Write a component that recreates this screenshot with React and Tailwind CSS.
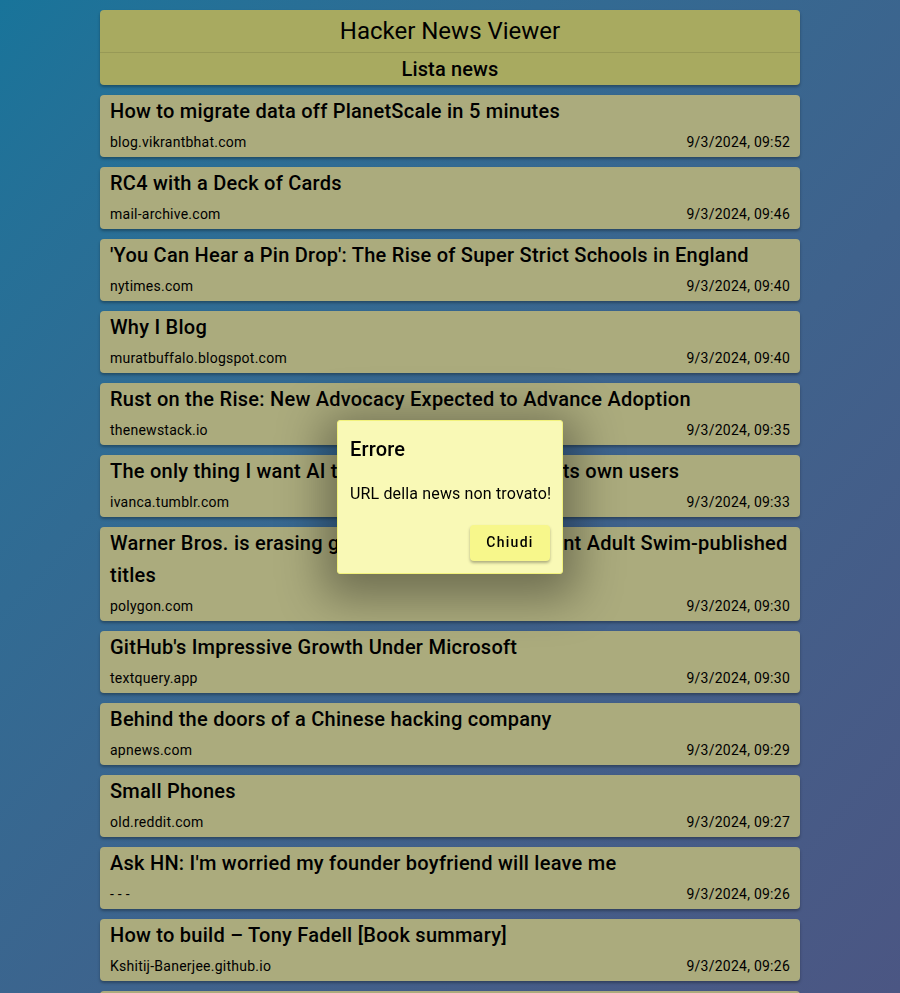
const news = [
  { title: "How to migrate data off PlanetScale in 5 minutes", site: "blog.vikrantbhat.com", time: "9/3/2024, 09:52" },
  { title: "RC4 with a Deck of Cards", site: "mail-archive.com", time: "9/3/2024, 09:46" },
  { title: "'You Can Hear a Pin Drop': The Rise of Super Strict Schools in England", site: "nytimes.com", time: "9/3/2024, 09:40" },
  { title: "Why I Blog", site: "muratbuffalo.blogspot.com", time: "9/3/2024, 09:40" },
  { title: "Rust on the Rise: New Advocacy Expected to Advance Adoption", site: "thenewstack.io", time: "9/3/2024, 09:35" },
  { title: "The only thing I want AI to do is protect me from its own users", site: "ivanca.tumblr.com", time: "9/3/2024, 09:33" },
  { title: "Warner Bros. is erasing games, including the recent Adult Swim-published titles", site: "polygon.com", time: "9/3/2024, 09:30" },
  { title: "GitHub's Impressive Growth Under Microsoft", site: "textquery.app", time: "9/3/2024, 09:30" },
  { title: "Behind the doors of a Chinese hacking company", site: "apnews.com", time: "9/3/2024, 09:29" },
  { title: "Small Phones", site: "old.reddit.com", time: "9/3/2024, 09:27" },
  { title: "Ask HN: I'm worried my founder boyfriend will leave me", site: "- - -", time: "9/3/2024, 09:26" },
  { title: "How to build – Tony Fadell [Book summary]", site: "Kshitij-Banerjee.github.io", time: "9/3/2024, 09:26" },
  { title: "Show HN: A tiny terminal text editor", site: "github.com", time: "9/3/2024, 09:21" },
];

function NewsCard({ item }) {
  return (
    <div className="bg-[#abab7d] rounded-[4px] shadow-[0_2px_3px_rgba(0,0,0,0.3)] px-[10px] text-black">
      <div className="text-[20px] font-medium leading-8 tracking-[0.25px]">{item.title}</div>
      <div className="flex justify-between text-[14px] leading-5 py-[5px] tracking-[0.25px]">
        <span>{item.site}</span>
        <span>{item.time}</span>
      </div>
    </div>
  );
}

export default function App() {
  return (
    <div
      className="min-h-screen bg-fixed bg-linear-to-br from-[#18749a] to-[#4b5683] text-black"
      style={{ fontFamily: "Roboto, 'Liberation Sans', sans-serif" }}
    >
      <div className="w-[700px] mx-auto pt-[10px] flex flex-col gap-[10px]">
        <div className="bg-[#a8aa60] rounded-[4px] shadow-[0_2px_3px_rgba(0,0,0,0.3)]">
          <div className="h-[43px] flex items-center justify-center text-[24px] border-b border-[#979956]">
            Hacker News Viewer
          </div>
          <div className="h-[32px] flex items-center justify-center text-[20px] font-medium tracking-[0.15px]">
            Lista news
          </div>
        </div>
        {news.map((item, i) => (
          <NewsCard key={i} item={item} />
        ))}
      </div>

      {/* Dialog errore */}
      <div className="fixed inset-0 flex items-center justify-center">
        <div className="w-[226px] bg-[#f9f9b6] border border-[#f2f27c] rounded-[3px] p-3 shadow-[0_10px_45px_14px_rgba(0,0,0,0.35)]">
          <div className="text-[20px] font-medium leading-8 tracking-[0.15px]">Errore</div>
          <div className="text-[16px] leading-6 mt-[17px] tracking-[0.15px] whitespace-nowrap">URL della news non trovato!</div>
          <div className="flex justify-end mt-[19px]">
            <button className="w-[80px] h-[36px] rounded-[4px] bg-[#f7f78b] text-[14px] font-medium tracking-[0.09em] shadow-[0_2px_3px_rgba(0,0,0,0.3)]">
              Chiudi
            </button>
          </div>
        </div>
      </div>
    </div>
  );
}
